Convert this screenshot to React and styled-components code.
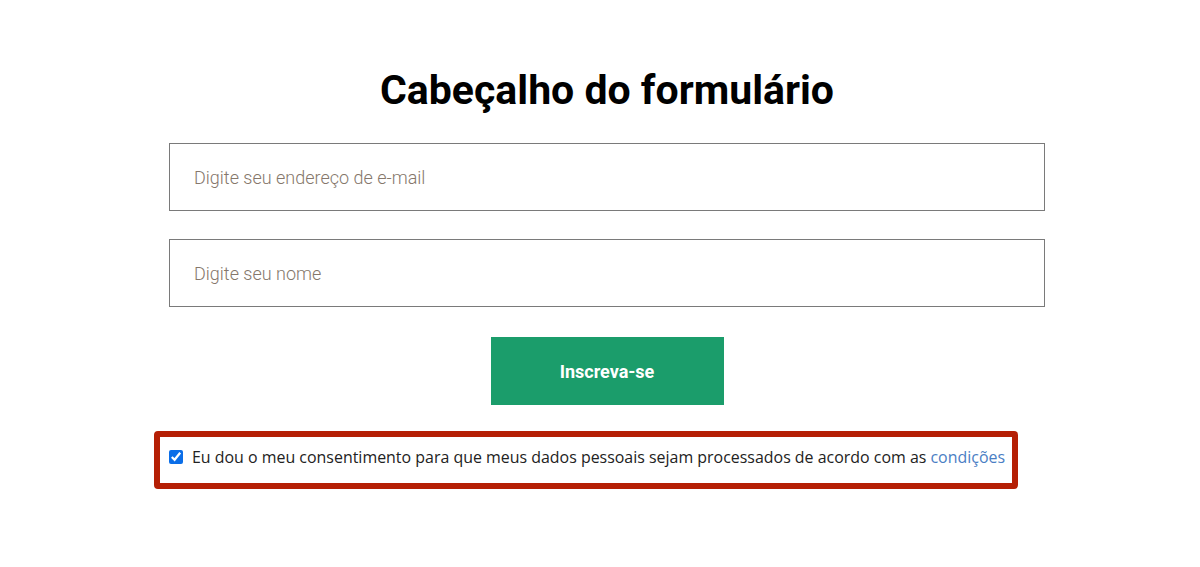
import React, { useState } from 'react'
import styled, { createGlobalStyle } from 'styled-components'

const GlobalStyle = createGlobalStyle`
  html, body {
    margin: 0;
    padding: 0;
    background: #fff;
  }
  * {
    box-sizing: border-box;
  }
`;

const Page = styled.div`
  display: flex;
  justify-content: center;
  padding: 66px 0 0 14px;
`;

const Form = styled.form`
  display: flex;
  flex-direction: column;
  align-items: center;
  width: 876px;
`;

const Title = styled.h1`
  margin: 0 0 29px;
  font-family: Roboto, "Liberation Sans", sans-serif;
  font-weight: 700;
  font-size: 41px;
  line-height: 48px;
  color: #000;
`;

const Input = styled.input`
  width: 100%;
  height: 68px;
  margin-bottom: ${({ $gap }) => $gap}px;
  padding: 0 24px;
  border: 1px solid #7a7a7a;
  border-radius: 0;
  font-family: Roboto, "Liberation Sans", sans-serif;
  font-weight: 300;
  font-size: 18px;
  color: #333;
  background: #fff;
  &:focus {
    outline: none;
  }
  &::placeholder {
    color: #85776b;
  }
`;

const Button = styled.button`
  width: 233px;
  height: 68px;
  border: none;
  background-color: #1b9d6b;
  color: #fff;
  font-family: Roboto, "Liberation Sans", sans-serif;
  font-weight: 700;
  font-size: 18px;
  cursor: pointer;
`;

const Consent = styled.label`
  display: flex;
  align-items: center;
  gap: 9px;
  align-self: flex-start;
  width: 864px;
  height: 58px;
  margin: 26px 0 0 -15px;
  padding: 0 4px 7px 9px;
  border: 6px solid #b51f05;
  border-radius: 4px;
  font-family: "Open Sans", "Liberation Sans", sans-serif;
  font-size: 15.95px;
  color: #222;
  white-space: nowrap;
  cursor: pointer;
`;

const Check = styled.input`
  flex: none;
  width: 14px;
  height: 14px;
  margin: 0;
  accent-color: #0b6ee8;
`;

const Terms = styled.a`
  color: #4a7ec4;
  text-decoration: none;
`;

export default function App() {
  const [agree, setAgree] = useState(true);
  return (
    <>
      <GlobalStyle />
      <Page>
        <Form onSubmit={(e) => e.preventDefault()}>
          <Title>Cabeçalho do formulário</Title>
          <Input type="email" placeholder="Digite seu endereço de e-mail" $gap={28} />
          <Input type="text" placeholder="Digite seu nome" $gap={30} />
          <Button type="submit">Inscreva-se</Button>
          <Consent>
            <Check type="checkbox" checked={agree} onChange={() => setAgree(!agree)} />
            <span>
              Eu dou o meu consentimento para que meus dados pessoais sejam processados de acordo com as{' '}
              <Terms href="#">condições</Terms>
            </span>
          </Consent>
        </Form>
      </Page>
    </>
  )
}
